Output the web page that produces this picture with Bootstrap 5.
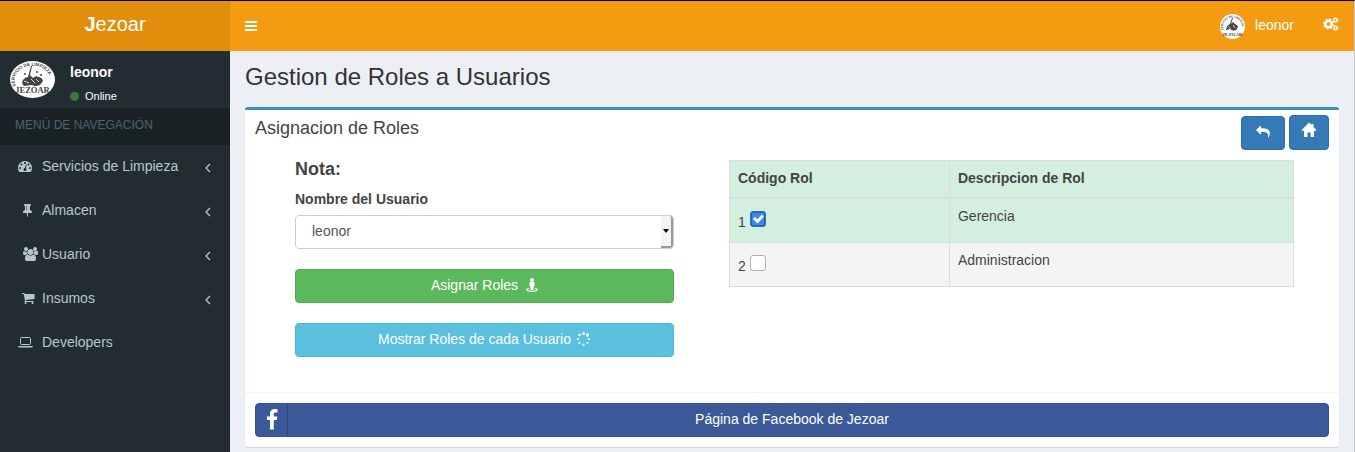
<!DOCTYPE html>
<html lang="es">
<head>
<meta charset="utf-8">
<meta name="viewport" content="width=device-width, initial-scale=1">
<title>Jezoar - Gestion de Roles</title>
<link href="https://cdn.jsdelivr.net/npm/bootstrap@5.3.0/dist/css/bootstrap.min.css" rel="stylesheet">
<style>
body{font-family:"Liberation Sans",Arial,sans-serif;font-size:14px;line-height:20px;color:#444;background:#ecf0f5;border-top:1px solid #000;border-right:1px solid #c8c4c0;min-height:100vh}
a{text-decoration:none}
svg{fill:currentColor;flex:none}
.side{width:230px;flex:none;background:#222d32}
.brand{height:50px;background:#e08e0b;font-size:20px;line-height:46px;color:#fff}
.topbar{height:50px;background:#f39c12;padding:0 15px}
.topbar a,.topbar button{color:#fff}
.username{padding:0 0 2px 10px}
.userbox{height:57px;padding:10px}
.userinfo{padding:1px 0 0 15px}
.userbox .online{font-size:11px;line-height:16px;gap:6px;padding-top:6px}
.dot{width:9px;height:9px;background:#3c763d}
.menuhead{height:37px;padding:8px 15px;font-size:12px;color:#4b646f;background:#1a2226;line-height:18px}
.menu a{height:44px;padding:0 18px 2px 18px;color:#b8c7ce}
.menu .ico{width:24px}
.page-title{font-size:24px;line-height:26px;margin:0;padding:13px 15px 17px;color:#333;font-weight:400}
.panel-box{background:#fff;border-top:3px solid #3c8dbc;border-radius:3px;box-shadow:0 1px 1px rgba(0,0,0,.1);margin:0 15px 5px}
.box-head{padding:5px 10px 0;height:50px}
.box-head h2{font-size:18px;line-height:20px;margin:3px 0 0;font-weight:400}
.cols{display:grid;grid-template-columns:379fr 565fr;column-gap:55px;padding:0 45px 35px 50px}
.cols h3{font-size:18px;line-height:18px;font-weight:700;margin:0 0 11px}
.cols label.fld{font-weight:700;display:block;margin-bottom:6px;line-height:20px}
.btn{font-size:14px;line-height:20px;padding:5px 12px 7px;border-radius:4px;color:#fff}
.btn:hover{color:#fff}
.b-green{background:#5cb85c;border-color:#4cae4c;margin-bottom:20px}
.b-blue{background:#5bc0de;border-color:#46b8da}
.b-prim{background:#337ab7;border-color:#2e6da4;padding-left:0;padding-right:0}
.b-back{width:44px;height:34px}
.b-home{width:40px;height:35px}
.b-face{background:#3b5998;border-color:#37538d;padding:0}
.b-face .fi{width:32px;height:32px;border-right:1px solid rgba(0,0,0,.2)}
.b-face .ft{padding:0 32px 2px 0}
.selwrap{height:34px;border:1px solid #ccc;border-radius:4px;margin-bottom:20px;overflow:hidden}
.selwrap select{appearance:none;border:0;outline:0;background:#fff;color:#555;width:100%;padding:0 16px 2px}
.selwrap .arr{width:12px;flex:none;background:#f3f3f3;border-right:2px solid #999;border-bottom:2px solid #999;color:#000;border-radius:0 3px 3px 0}
.roles{width:100%;border-collapse:collapse}
.roles th,.roles td{border:1px solid #ddd;padding:7px 8px 9px;vertical-align:top;line-height:20px}
.roles td{padding-bottom:10px}
.roles th{border-bottom-width:2px}
.roles .on{background:#d4eee0}
.roles .off{background:#f4f4f4}
.roles .c1{width:39%}
.roles input{appearance:none;width:16px;height:16px;margin:5px 0 0;border:1px solid #b6aea6;border-radius:3px;background:#fff;vertical-align:baseline}
.roles input:checked{border:1px solid #2a72d0;background:#3f8ae6 url("data:image/svg+xml,%3Csvg xmlns='http://www.w3.org/2000/svg' viewBox='0 0 14 14'%3E%3Crect x='.5' y='.5' width='13' height='13' fill='none' stroke='%23123a75' stroke-dasharray='1 1'/%3E%3Cpath d='M3 6l3.500 3.500L12 3.500' fill='none' stroke='white' stroke-width='2.800'/%3E%3C/svg%3E") center/14px 14px}
.box-foot{border-top:1px solid #f4f4f4;padding:10px}
.seal text{font-family:"Liberation Serif",serif;font-weight:700;fill:#444}
.seal .arc{font-family:"Liberation Sans",sans-serif}
</style>
</head>
<body>
<div class="d-flex min-vh-100">
<aside class="side">
  <a href="#" class="brand d-block text-center"><b>J</b>ezoar</a>
  <div class="userbox d-flex">
    <svg class="seal" width="45" height="37" viewBox="0 0 45 37" aria-hidden="true"><ellipse cx="22.500" cy="18.500" rx="22.500" ry="18.500" fill="#fff"/>
      <path id="arcA" d="M6 25A18 14.500 0 1 1 39 25" fill="none"/><text class="arc" font-size="4.500"><textPath href="#arcA">SERVICIO DE LIMPIEZA</textPath></text>
      <path d="M21 5h1l-2 9 3 3 3-2 2 1q4 0 5 4l-3 4q-5 2-8 0l-8 1q-3-3-1-6 2-3 5-3z" fill="#444"/><path d="M14 20l5 2M21 18l4 4M26 18l3 3" stroke="#ddd" fill="none"/><circle cx="15" cy="13" r="1" fill="#444"/><circle cx="27" cy="11" r="1" fill="#444"/><circle cx="31" cy="14" r="1" fill="#444"/>
      <text x="22.500" y="32" font-size="8.500" text-anchor="middle">JEZOAR</text></svg>
    <div class="userinfo text-white">
      <div class="fw-bold">leonor</div>
      <a href="#" class="online text-white d-flex align-items-center"><span class="dot rounded-circle"></span><span>Online</span></a>
    </div>
  </div>
  <div class="menuhead">MENÚ DE NAVEGACIÓN</div>
  <nav class="menu">
    <a href="#" class="d-flex align-items-center"><span class="ico d-flex"><svg width="14" height="14" viewBox="0 0 1792 1792"><path d="M384 1152q0-53-37.500-90.500t-90.500-37.500-90.500 37.500-37.500 90.500 37.500 90.500 90.500 37.500 90.500-37.500 37.500-90.500zm192-448q0-53-37.500-90.500t-90.500-37.500-90.500 37.500-37.500 90.500 37.500 90.500 90.500 37.500 90.500-37.500 37.500-90.500zm428 481l101-382q6-26-7.500-48.500t-38.500-29.500-48 6.500-30 39.500l-101 382q-60 5-107 43.500t-63 98.500q-20 77 20 146t117 89 146-20 89-117q16-60-6-117t-72-91zm660-33q0-53-37.500-90.500t-90.500-37.500-90.500 37.500-37.500 90.500 37.500 90.500 90.500 37.500 90.500-37.500 37.500-90.500zm-640-640q0-53-37.500-90.500t-90.500-37.500-90.500 37.500-37.500 90.500 37.500 90.500 90.500 37.500 90.500-37.500 37.500-90.500zm448 192q0-53-37.500-90.500t-90.500-37.500-90.500 37.500-37.500 90.500 37.500 90.500 90.500 37.500 90.500-37.500 37.500-90.500zm320 448q0 261-141 483-19 29-54 29h-1402q-35 0-54-29-141-221-141-483 0-182 71-348t191-286 286-191 348-71 348 71 286 191 191 286 71 348z"/></svg></span><span class="flex-grow-1">Servicios de Limpieza</span><svg class="mt-1" width="8" height="10" viewBox="0 0 8 10"><path d="M6 1L2 5l4 4" fill="none" stroke="currentColor" stroke-width="1.300"/></svg></a>
    <a href="#" class="d-flex align-items-center"><span class="ico d-flex ps-1"><svg width="14" height="14" viewBox="200 0 1792 1792"><path d="M800 864v-448q0-14-9-23t-23-9-23 9-9 23v448q0 14 9 23t23 9 23-9 9-23zm672 352q0 26-19 45t-45 19h-429l-51 483q-2 12-10.500 20.500t-20.500 8.500h-1q-27 0-32-27l-76-485h-404q-26 0-45-19t-19-45q0-123 78.500-221.500t177.500-98.500v-512q-52 0-90-38t-38-90 38-90 90-38h640q52 0 90 38t38 90-38 90-90 38v512q99 0 177.500 98.500t78.500 221.500z"/></svg></span><span class="flex-grow-1">Almacen</span><svg class="mt-1" width="8" height="10" viewBox="0 0 8 10"><path d="M6 1L2 5l4 4" fill="none" stroke="currentColor" stroke-width="1.300"/></svg></a>
    <a href="#" class="d-flex align-items-center"><span class="ico d-flex justify-content-center"><svg width="15" height="14" viewBox="0 0 1920 1792"><path d="M593 896q-162 5-265 128h-134q-82 0-138-40.500t-56-118.500q0-353 124-353 6 0 43.500 21t97.500 42.500 119 21.500q67 0 133-23-5 37-5 66 0 159 93 294zm1071 637q0 120-73 189.500t-194 69.500h-874q-121 0-194-69.500t-73-189.500q0-53 3.500-103.500t14-109 26.500-108.500 43-97.500 62-81 85.500-53.500 111.500-20q10 0 43 21.500t73 48 107 48 135 21.500 135-21.500 107-48 73-48 43-21.500q61 0 111.500 20t85.500 53.500 62 81 43 97.500 26.500 108.500 14 109 3.500 103.500zm-1024-1277q0 106-75 181t-181 75-181-75-75-181 75-181 181-75 181 75 75 181zm704 384q0 159-112.500 271.500t-271.500 112.500-271.500-112.500-112.500-271.500 112.500-271.500 271.500-112.500 271.500 112.500 112.500 271.500zm576 225q0 78-56 118.500t-138 40.500h-134q-103-123-265-128 93-135 93-294 0-29-5-66 66 23 133 23 59 0 119-21.500t97.500-42.500 43.500-21q124 0 124 353zm-128-609q0 106-75 181t-181 75-181-75-75-181 75-181 181-75 181 75 75 181z"/></svg></span><span class="flex-grow-1">Usuario</span><svg class="mt-1" width="8" height="10" viewBox="0 0 8 10"><path d="M6 1L2 5l4 4" fill="none" stroke="currentColor" stroke-width="1.300"/></svg></a>
    <a href="#" class="d-flex align-items-center"><span class="ico d-flex ps-1"><svg width="14" height="14" viewBox="120 0 1792 1792"><path d="M704 1536q0 52-38 90t-90 38-90-38-38-90 38-90 90-38 90 38 38 90zm896 0q0 52-38 90t-90 38-90-38-38-90 38-90 90-38 90 38 38 90zm128-1088v512q0 24-16.500 42.500t-40.500 21.500l-1044 122q13 60 13 70 0 16-24 64h920q26 0 45 19t19 45-19 45-45 19h-1024q-26 0-45-19t-19-45q0-11 8-31.500t16-36 21.500-40 15.500-29.500l-177-823h-204q-26 0-45-19t-19-45 19-45 45-19h256q16 0 28.500 6.500t19.500 15.500 13 24.500 8 26 5.500 29.500 4.500 26h1201q26 0 45 19t19 45z"/></svg></span><span class="flex-grow-1">Insumos</span><svg class="mt-1" width="8" height="10" viewBox="0 0 8 10"><path d="M6 1L2 5l4 4" fill="none" stroke="currentColor" stroke-width="1.300"/></svg></a>
    <a href="#" class="d-flex align-items-center"><span class="ico d-flex"><svg width="15" height="12" viewBox="0 0 15 12"><rect x="2.500" y="1.500" width="10" height="7" rx="1" fill="none" stroke="currentColor"/><path d="M0 10h15q0 1.500-1.500 1.500h-12Q0 11.500 0 10z"/></svg></span><span class="flex-grow-1">Developers</span></a>
  </nav>
</aside>
<div class="flex-grow-1">
  <header class="topbar d-flex align-items-center">
    <button type="button" class="border-0 bg-transparent p-0 d-flex" aria-label="Menú"><svg width="12" height="10" viewBox="0 0 12 10"><path d="M0 0h12v2H0zM0 4h12v2H0zM0 8h12v2H0z"/></svg></button>
    <a href="#" class="ms-auto d-flex align-items-center"><svg class="seal" width="25" height="25" viewBox="0 0 25 25" aria-hidden="true"><circle cx="12.500" cy="12.500" r="12.500" fill="#fff"/><path id="arcB" d="M3.500 16A9.500 9.500 0 1 1 21.500 16" fill="none"/><text class="arc" font-size="2.800"><textPath href="#arcB">SERVICIO DE LIMPIEZA</textPath></text>
      <path d="M12 4l-2 6-3 2-1 4 4-1q4 3 7 0l1-3-3-2-2-2-2 2 2-6z" fill="#444"/><path d="M8 12l3 3M13 11l2 3" stroke="#fff" stroke-width=".7"/><text x="12.500" y="21.500" font-size="5" text-anchor="middle">JEZOAR</text></svg><span class="username">leonor</span></a>
    <a href="#" class="d-flex ps-4 pb-1" aria-label="Opciones"><svg class="ms-1" width="17" height="14" viewBox="0 0 17 14"><g fill="none" stroke="currentColor"><circle cx="6.500" cy="7" r="3.200" stroke-width="2.400"/><circle cx="6.500" cy="7" r="4.700" stroke-width="1.600" stroke-dasharray="1.850 1.840"/><circle cx="13.500" cy="3" r="1.700" stroke-width="1.300"/><circle cx="13.500" cy="3" r="2.500" stroke-width=".8" stroke-dasharray="1.310 1.310"/><circle cx="13.500" cy="11" r="1.700" stroke-width="1.300"/><circle cx="13.500" cy="11" r="2.500" stroke-width=".8" stroke-dasharray="1.310 1.310"/></g></svg></a>
  </header>
  <main>
    <h1 class="page-title">Gestion de Roles a Usuarios</h1>
    <section class="panel-box">
      <div class="box-head d-flex justify-content-between">
        <h2>Asignacion de Roles</h2>
        <div class="d-flex align-items-end gap-1 align-self-start">
          <button type="button" class="btn b-prim b-back d-flex align-items-start justify-content-center" aria-label="Volver"><svg class="mt-1" width="14" height="12" viewBox="0 100 1792 1600"><path d="M1792 1120q0 166-127 451-3 7-10.500 24t-13.500 30-13 22q-12 17-28 17-15 0-23.500-10t-8.500-25q0-9 2.500-26.500t2.500-23.500q5-68 5-123 0-101-17.500-181t-48.500-138.500-80-101-105.500-69.500-133-42.500-154-21.500-175.500-6h-224v256q0 26-19 45t-45 19-45-19l-512-512q-19-19-19-45t19-45l512-512q19-19 45-19t45 19 19 45v256h224q713 0 875 403 53 134 53 333z"/></svg></button>
          <button type="button" class="btn b-prim b-home d-flex align-items-start justify-content-center" aria-label="Inicio"><svg width="16" height="17" viewBox="0 0 16 17"><path d="M8 1.500l2.500 2.300V3h2v2.700L15.300 9v.7H13V16H9.700v-4.500H6.500V16H3V9.700H.7V9z"/></svg></button>
        </div>
      </div>
      <div class="cols">
        <form>
          <h3>Nota:</h3>
          <label class="fld" for="user">Nombre del Usuario</label>
          <div class="selwrap d-flex"><select id="user"><option>leonor</option></select><span class="arr d-flex align-items-center justify-content-center"><svg width="6" height="4" viewBox="0 0 6 4"><path d="M0 0h6L3 4z"/></svg></span></div>
          <button type="button" class="btn b-green w-100 d-flex align-items-center justify-content-center"><span>Asignar Roles</span><svg class="ms-2" width="12" height="14" viewBox="0 0 12 14"><circle cx="6" cy="2" r="2"/><path d="M3.500 4h5v4l-1 .5V12h-3V8.500l-1-.5z"/><path d="M3 10.300Q.5 11 .7 11.800 1.500 13.300 6 13.300t5.300-1.500Q11.500 11 9 10.300" fill="none" stroke="currentColor" stroke-width="1.200"/></svg></button>
          <button type="button" class="btn b-blue w-100 d-flex align-items-center justify-content-center"><span>Mostrar Roles de cada Usuario</span><svg class="ms-1" width="16" height="14" viewBox="0 0 16 14"><circle cx="8.500" cy="1.500" r="1.500"/><circle cx="12.500" cy="3" r="1.700"/><circle cx="14" cy="7" r="1"/><circle cx="12.500" cy="11" r="1"/><circle cx="8.500" cy="12.800" r="1.100"/><circle cx="4.500" cy="11" r="1.100"/><circle cx="3" cy="7" r="1.100"/><circle cx="4.500" cy="3" r="1.300"/></svg></button>
        </form>
        <div>
          <table class="roles">
            <colgroup><col class="c1"><col></colgroup>
            <thead><tr class="on"><th scope="col">Código Rol</th><th scope="col">Descripcion de Rol</th></tr></thead>
            <tbody>
              <tr class="on"><td><label for="r1">1</label> <input id="r1" type="checkbox" checked></td><td>Gerencia</td></tr>
              <tr class="off"><td><label for="r2">2</label> <input id="r2" type="checkbox"></td><td>Administracion</td></tr>
            </tbody>
          </table>
        </div>
      </div>
      <div class="box-foot">
        <a href="#" class="btn b-face d-flex align-items-center"><span class="fi d-flex align-items-center justify-content-center"><svg width="22" height="22" viewBox="0 0 1792 1792"><path d="M1343 12v264h-157q-86 0-116 36t-30 108v189h293l-39 296h-254v759h-306v-759h-255v-296h255v-218q0-186 104-288.500t277-102.500q147 0 228 12z"/></svg></span><span class="ft flex-grow-1 text-center">Página de Facebook de Jezoar</span></a>
      </div>
    </section>
  </main>
</div>
</div>
<script src="https://cdn.jsdelivr.net/npm/bootstrap@5.3.0/dist/js/bootstrap.bundle.min.js"></script>
</body>
</html>
